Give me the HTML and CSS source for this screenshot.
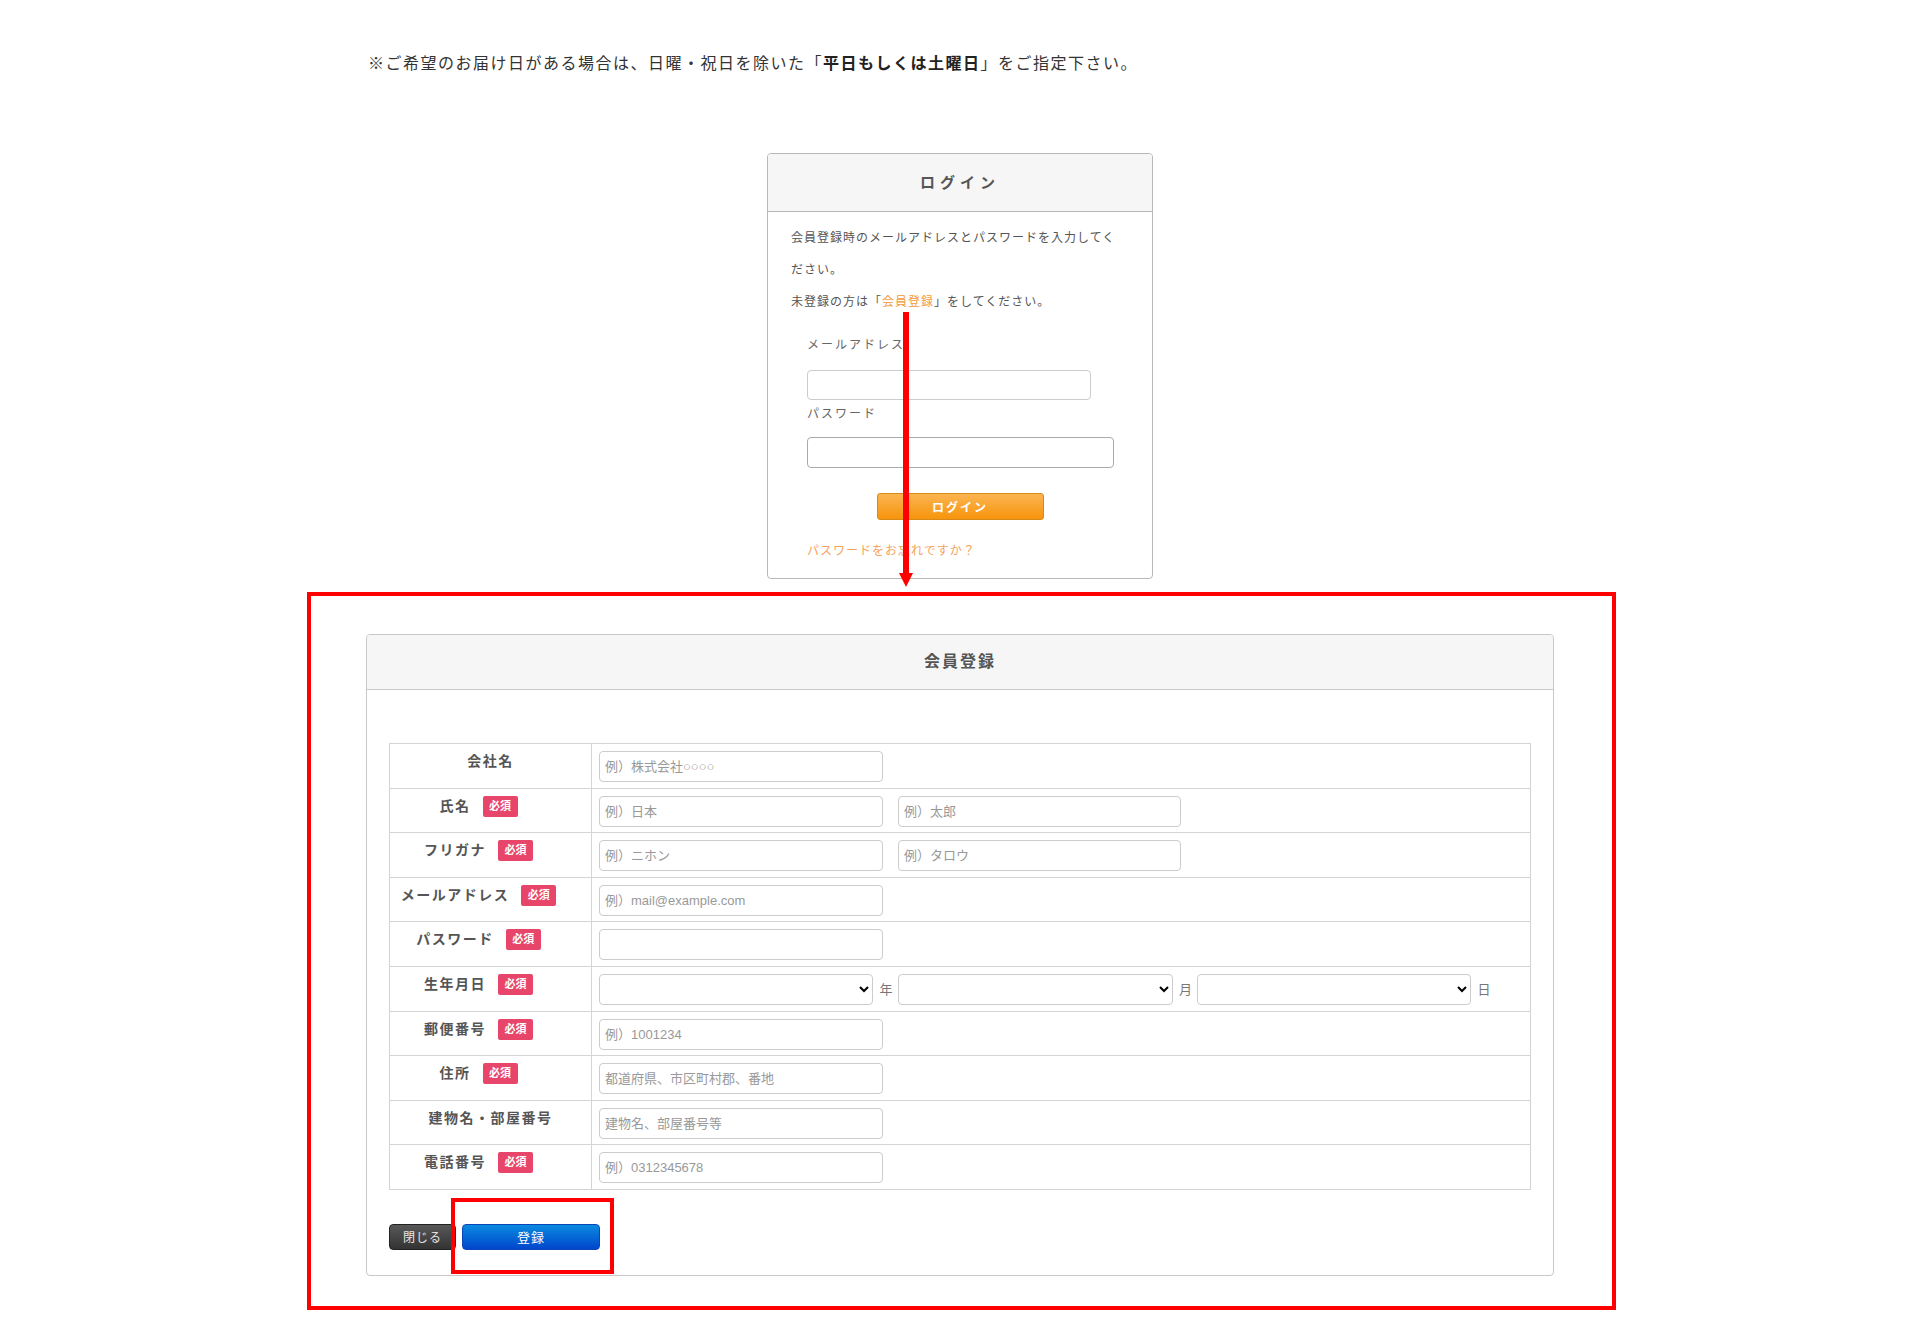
FILE: index.html
```html
<!DOCTYPE html>
<html lang="ja">
<head>
    <meta charset="utf-8">
    <link rel="stylesheet" href="styles.css">
</head>
<body>
<div class="page">
    <p class="delivery-note">※ご希望のお届け日がある場合は、日曜・祝日を除いた「<strong>平日もしくは土曜日</strong>」をご指定下さい。</p>

    <div class="login-box">
        <h2 class="login-title">ログイン</h2>
        <div class="login-body">
            <p class="login-text">会員登録時のメールアドレスとパスワードを入力してください。</p>
            <p class="login-text">未登録の方は「<a href="#" class="orange-link">会員登録</a>」をしてください。</p>

            <div class="login-form">
                <label class="login-label">メールアドレス</label>
                <input class="login-input login-email" type="text">
                <label class="login-label label-pass">パスワード</label>
                <input class="login-input login-pass" type="password">
            </div>
            <div class="login-btn-wrap">
                <button class="btn-login">ログイン</button>
            </div>
            <a href="#" class="forgot-link">パスワードをお忘れですか？</a>
        </div>
    </div>

    <div class="mark-box">
        <div class="panel">
            <h2 class="panel-title">会員登録</h2>
            <div class="panel-body">
                <table class="entry-table">
                    <tr>
                        <th>会社名</th>
                        <td><div class="field"><input type="text" placeholder="例）株式会社○○○○"></div></td>
                    </tr>
                    <tr>
                        <th>氏名<span class="req">必須</span></th>
                        <td><div class="field"><input type="text" placeholder="例）日本"><input type="text" class="second" placeholder="例）太郎"></div></td>
                    </tr>
                    <tr>
                        <th>フリガナ<span class="req">必須</span></th>
                        <td><div class="field"><input type="text" placeholder="例）ニホン"><input type="text" class="second" placeholder="例）タロウ"></div></td>
                    </tr>
                    <tr>
                        <th>メールアドレス<span class="req">必須</span></th>
                        <td><div class="field"><input type="text" placeholder="例）mail@example.com"></div></td>
                    </tr>
                    <tr>
                        <th>パスワード<span class="req">必須</span></th>
                        <td><div class="field"><input type="password"></div></td>
                    </tr>
                    <tr>
                        <th>生年月日<span class="req">必須</span></th>
                        <td>
                            <div class="field date-field">
                                <select class="sel-year"><option></option></select><span class="unit">年</span>
                                <select class="sel-month"><option></option></select><span class="unit">月</span>
                                <select class="sel-day"><option></option></select><span class="unit">日</span>
                            </div>
                        </td>
                    </tr>
                    <tr>
                        <th>郵便番号<span class="req">必須</span></th>
                        <td><div class="field"><input type="text" placeholder="例）1001234"></div></td>
                    </tr>
                    <tr>
                        <th>住所<span class="req">必須</span></th>
                        <td><div class="field"><input type="text" placeholder="都道府県、市区町村郡、番地"></div></td>
                    </tr>
                    <tr>
                        <th>建物名・部屋番号</th>
                        <td><div class="field"><input type="text" placeholder="建物名、部屋番号等"></div></td>
                    </tr>
                    <tr>
                        <th>電話番号<span class="req">必須</span></th>
                        <td><div class="field"><input type="text" placeholder="例）0312345678"></div></td>
                    </tr>
                </table>

                <div class="panel-buttons">
                    <button class="btn-close">閉じる</button>
                    <button class="btn-submit">登録</button>
                    <span class="mark-submit"></span>
                </div>
            </div>
        </div>
    </div>

    <svg class="mark-arrow" width="14" height="276" viewBox="0 0 14 276">
        <rect x="4" y="0" width="6" height="262" fill="#ff0000"/>
        <polygon points="0,261 14,261 7,275" fill="#ff0000"/>
    </svg>
</div>
</body>
</html>
```

FILE: styles.css
```css
* {
    box-sizing: border-box;
}

body {
    margin: 0;
    background-color: #fff;
    font-family: "Liberation Sans", "Noto Sans CJK JP", sans-serif;
    color: #333;
}

.page {
    position: relative;
    width: 1188px;
    margin: 0 auto;
    padding-top: 52px;
    padding-bottom: 18px;
}

.delivery-note {
    margin: 0 0 0 2px;
    font-size: 16px;
    line-height: 24px;
    letter-spacing: 1.5px;
    color: #333;
}

.delivery-note strong {
    color: #222;
}

/* login */

.login-box {
    width: 386px;
    margin: 77px auto 0;
    border: 1px solid #b8b8b8;
    border-radius: 4px;
    overflow: hidden;
}

.login-title {
    margin: 0;
    height: 58px;
    line-height: 57px;
    background-color: #f6f6f6;
    border-bottom: 1px solid #b8b8b8;
    text-align: center;
    font-size: 15px;
    letter-spacing: 5px;
    color: #555;
}

.login-body {
    padding: 10px 23px 17px 23px;
}

.login-text {
    margin: 0;
    padding-right: 8px;
    font-size: 12px;
    line-height: 32px;
    letter-spacing: 1px;
    color: #555;
}

.orange-link {
    color: #f39a3c;
    text-decoration: none;
}

.login-form {
    margin-left: 16px;
    padding-top: 17px;
}

.login-label {
    display: block;
    font-size: 12px;
    line-height: 20px;
    letter-spacing: 2px;
    color: #666;
}

.label-pass {
    margin-top: 4px;
}

.login-input {
    display: block;
    border: 1px solid #ccc;
    border-radius: 4px;
    background-color: #fff;
}

.login-email {
    width: 284px;
    height: 30px;
    margin-top: 15px;
}

.login-pass {
    width: 307px;
    height: 31px;
    margin-top: 13px;
    border-color: #aaa;
}

.login-btn-wrap {
    display: flex;
    justify-content: center;
    margin-top: 25px;
}

.btn-login {
    width: 167px;
    height: 27px;
    padding: 0;
    border: 1px solid #d88a18;
    border-radius: 3px;
    background: linear-gradient(#fbb552, #f7940c);
    color: #fff;
    font-family: inherit;
    font-size: 12px;
    font-weight: bold;
    letter-spacing: 2px;
}

.forgot-link {
    display: block;
    margin: 21px 0 0 16px;
    font-size: 12px;
    line-height: 20px;
    letter-spacing: 1px;
    color: #f5a35c;
    text-decoration: none;
}

/* register panel */

.mark-box {
    margin: 13px -62px 0 -59px;
    padding: 38px 58px 30px 55px;
    border: 4px solid #ff0000;
}

.panel {
    border: 1px solid #c8c8c8;
    border-radius: 4px;
    overflow: hidden;
}

.panel-title {
    margin: 0;
    height: 55px;
    line-height: 54px;
    background-color: #f6f6f6;
    border-bottom: 1px solid #c8c8c8;
    text-align: center;
    font-size: 16px;
    letter-spacing: 2px;
    color: #555;
}

.panel-body {
    padding: 53px 22px 25px;
}

.entry-table {
    width: 100%;
    border-collapse: collapse;
    table-layout: fixed;
    border: 1px solid #d4d4d4;
}

.entry-table th {
    width: 202px;
    padding: 7px 0 0;
    vertical-align: top;
    text-align: center;
    border: 1px solid #d4d4d4;
    font-size: 14px;
    line-height: 20px;
    letter-spacing: 1.5px;
    color: #555;
}

.entry-table td {
    padding: 7px 7px 5.6px;
    border: 1px solid #d4d4d4;
}

.req {
    display: inline-block;
    vertical-align: top;
    width: 35px;
    height: 21px;
    line-height: 21px;
    margin: 0 24px 0 12px;
    border-radius: 2px;
    background-color: #e8456a;
    color: #fff;
    font-size: 11px;
    letter-spacing: 0;
    text-align: center;
}

.field {
    display: flex;
    align-items: center;
    gap: 15px;
}

.field input {
    width: 284px;
    height: 31px;
    padding: 0 5px;
    border: 1px solid #ccc;
    border-radius: 4px;
    background-color: #fff;
    font-family: inherit;
    font-size: 13px;
    color: #333;
}

.field input.second {
    width: 283px;
}

.field input::placeholder {
    color: #999;
}

.date-field {
    gap: 0;
}

.date-field select {
    height: 31px;
    border: 1px solid #ccc;
    border-radius: 4px;
    background-color: #fff;
    font-family: inherit;
    font-size: 13px;
}

.sel-year,
.sel-day {
    width: 274px;
}

.sel-month {
    width: 275px;
}

.unit {
    margin: 0 5px 2px 6.5px;
    font-size: 13px;
    color: #777;
}

.panel-buttons {
    position: relative;
    display: flex;
    gap: 6px;
    margin-top: 34px;
}

.btn-close {
    width: 67px;
    height: 26px;
    padding: 0;
    border: 1px solid #222;
    border-radius: 4px;
    background: linear-gradient(#585858, #333);
    color: #e6e6e6;
    font-family: inherit;
    font-size: 12px;
    letter-spacing: 1px;
}

.btn-submit {
    width: 138px;
    height: 26px;
    padding: 0;
    border: 1px solid #0a46b8;
    border-radius: 4px;
    background: linear-gradient(#0a8ae0, #0046cc);
    color: #fff;
    font-family: inherit;
    font-size: 13px;
    letter-spacing: 1px;
}

.mark-submit {
    position: absolute;
    left: 62px;
    top: -26px;
    width: 163px;
    height: 76px;
    border: 4px solid #ff0000;
}

.mark-arrow {
    position: absolute;
    left: 533px;
    top: 312px;
}
```
